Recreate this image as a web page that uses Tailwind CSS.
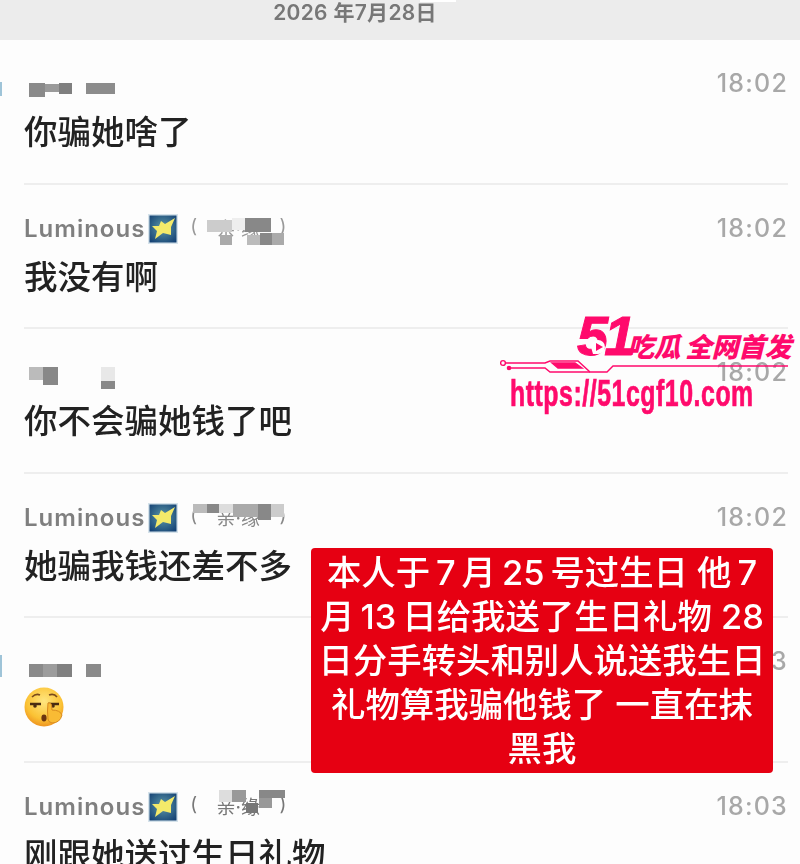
<!DOCTYPE html>
<html lang="zh">
<head>
<meta charset="utf-8">
<script src="https://cdn.jsdelivr.net/npm/@tailwindcss/browser@4"></script>
</head>
<body class="bg-white font-['Inter','Noto_Sans_CJK_SC',sans-serif]">
<div class="relative w-[800px] h-[864px] overflow-hidden bg-[#fdfdfd]">
  <!-- date bar -->
  <div class="h-[40px] bg-[#ececec] flex justify-center blur-[0.5px]">
    <span class="mr-[90px] mt-[-1px] text-[21px] leading-[28px] font-semibold text-[#777] tracking-[0.3px]">2026 年7月28日</span>
  </div>

  <!-- list -->
  <div class="pl-[24px] pr-[12px] blur-[0.5px]">
    <div class="h-[144.5px] border-b-[2px] border-[#eeeeee] pt-[28px]">
      <div class="h-[32px] flex justify-end items-center text-[25px] font-medium text-[#a8a8a8] tracking-[1.2px]"><span>18:02</span></div>
      <p class="mt-[8px] text-[33.5px] leading-[48px] font-medium text-[#222]">你骗她啥了</p>
    </div>
    <div class="h-[144.5px] border-b-[2px] border-[#eeeeee] pt-[28px]">
      <div class="h-[32px] flex justify-between items-center">
        <div class="flex items-center text-[24px] tracking-[1px] text-[#7f7f7f] font-semibold"><span>Luminous</span><svg class="ml-[3px]" width="30" height="30" viewBox="0 0 30 30"><defs><radialGradient id="s1" cx="50%" cy="45%" r="70%"><stop offset="0%" stop-color="#5e9aa8"/><stop offset="100%" stop-color="#123f73"/></radialGradient></defs><rect width="30" height="30" fill="#d5e2ea"/><rect x="1.5" y="1.5" width="27" height="27" fill="url(#s1)"/><path d="M13 7 L17 10 L27 4 L23 13 L23 21 L15 19 L7 25 L9 17 L4 12 L11 12Z" fill="#f4ea6a"/></svg><span class="ml-[12px] w-[96px] flex justify-between text-[#999] font-normal text-[19px] tracking-normal"><span>(</span><span class="mt-[3px]">亲·缘</span><span>)</span></span></div>
        <span class="text-[25px] font-medium text-[#a8a8a8] tracking-[1.2px]">18:02</span>
      </div>
      <p class="mt-[8px] text-[33.5px] leading-[48px] font-medium text-[#222]">我没有啊</p>
    </div>
    <div class="h-[144.5px] border-b-[2px] border-[#eeeeee] pt-[28px]">
      <div class="h-[32px] flex justify-end items-center text-[25px] font-medium text-[#a8a8a8] tracking-[1.2px]"><span>18:02</span></div>
      <p class="mt-[8px] text-[33.5px] leading-[48px] font-medium text-[#222]">你不会骗她钱了吧</p>
    </div>
    <div class="h-[144.5px] border-b-[2px] border-[#eeeeee] pt-[28px]">
      <div class="h-[32px] flex justify-between items-center">
        <div class="flex items-center text-[24px] tracking-[1px] text-[#7f7f7f] font-semibold"><span>Luminous</span><svg class="ml-[3px]" width="30" height="30" viewBox="0 0 30 30"><rect width="30" height="30" fill="#d5e2ea"/><rect x="1.5" y="1.5" width="27" height="27" fill="url(#s1)"/><path d="M13 7 L17 10 L27 4 L23 13 L23 21 L15 19 L7 25 L9 17 L4 12 L11 12Z" fill="#f4ea6a"/></svg><span class="ml-[12px] w-[96px] flex justify-between text-[#888] font-normal text-[19px] tracking-normal"><span>(</span><span class="mt-[3px]">亲·缘</span><span>)</span></span></div>
        <span class="text-[25px] font-medium text-[#a8a8a8] tracking-[1.2px]">18:02</span>
      </div>
      <p class="mt-[8px] text-[33.5px] leading-[48px] font-medium text-[#222]">她骗我钱还差不多</p>
    </div>
    <div class="h-[144.5px] border-b-[2px] border-[#eeeeee] pt-[28px]">
      <div class="h-[32px] flex justify-end items-center text-[25px] font-medium text-[#a8a8a8] tracking-[1.2px]"><span>18:03</span></div>
      <svg class="mt-[8px]" width="42" height="42" viewBox="0 0 42 42">
        <defs><radialGradient id="face" cx="50%" cy="35%" r="65%"><stop offset="0%" stop-color="#ffe680"/><stop offset="70%" stop-color="#fbc234"/><stop offset="100%" stop-color="#ee9420"/></radialGradient></defs>
        <circle cx="20" cy="21" r="19.5" fill="url(#face)"/>
        <path d="M8 11 Q12 7 16 9 M25 9 Q30 7 33 11" fill="none" stroke="#7a4a1c" stroke-width="1.6"/>
        <path d="M6 18 H17 M24 18 H35" stroke="#4a2c12" stroke-width="2.4"/>
        <circle cx="11" cy="20" r="1.8" fill="#4a2c12"/><circle cx="29" cy="20" r="1.8" fill="#4a2c12"/>
        <ellipse cx="20" cy="32" rx="2.6" ry="3.4" fill="#6b3410"/>
        <path d="M24 33 Q23 25 24 17 Q27 16 27.5 19 L28 24 Q36 24 38 29 Q36 37 28 37 Q24 36 24 33Z" fill="#f9bb34" stroke="#d98a1e" stroke-width="1"/>
      </svg>
    </div>
    <div class="h-[144.5px] pt-[28px]">
      <div class="h-[32px] flex justify-between items-center">
        <div class="flex items-center text-[24px] tracking-[1px] text-[#7f7f7f] font-semibold"><span>Luminous</span><svg class="ml-[3px]" width="30" height="30" viewBox="0 0 30 30"><rect width="30" height="30" fill="#d5e2ea"/><rect x="1.5" y="1.5" width="27" height="27" fill="url(#s1)"/><path d="M13 7 L17 10 L27 4 L23 13 L23 21 L15 19 L7 25 L9 17 L4 12 L11 12Z" fill="#f4ea6a"/></svg><span class="ml-[12px] w-[96px] flex justify-between text-[#777] font-normal text-[19px] tracking-normal"><span>(</span><span class="mt-[3px]">亲·缘</span><span>)</span></span></div>
        <span class="text-[25px] font-medium text-[#a8a8a8] tracking-[1.2px]">18:03</span>
      </div>
      <p class="mt-[8px] text-[33.5px] leading-[48px] font-medium text-[#222]">刚跟她送过生日礼物</p>
    </div>
  </div>

  <!-- mosaics laid over the names -->
  <div class="absolute inset-0 pointer-events-none blur-[0.6px]">
    <i class="absolute left-[420px] top-0 w-[36px] h-[2px] bg-white"></i>
    <i class="absolute left-[29px] top-[83px] w-[16px] h-[14px] bg-[#8a8a8a]"></i><i class="absolute left-[45px] top-[84px] w-[14px] h-[8px] bg-[#9a9a9a]"></i><i class="absolute left-[59px] top-[83px] w-[13px] h-[11px] bg-[#7f7f7f]"></i><i class="absolute left-[86px] top-[83px] w-[29px] h-[11px] bg-[#8c8c8c]"></i>
    <i class="absolute left-[207px] top-[220px] w-[25px] h-[12px] bg-[#cccccc]"></i><i class="absolute left-[232px] top-[218px] w-[13px] h-[12px] bg-[#eeeeee]"></i><i class="absolute left-[245px] top-[218px] w-[26px] h-[14px] bg-[#888888]"></i><i class="absolute left-[220px] top-[235px] w-[12px] h-[10px] bg-[#aaaaaa]"></i><i class="absolute left-[247px] top-[235px] w-[13px] h-[10px] bg-[#bbbbbb]"></i><i class="absolute left-[260px] top-[233px] w-[12px] h-[12px] bg-[#888888]"></i><i class="absolute left-[272px] top-[233px] w-[12px] h-[12px] bg-[#aaaaaa]"></i>
    <i class="absolute left-[29px] top-[367px] w-[14px] h-[13px] bg-[#bbbbbb]"></i><i class="absolute left-[43px] top-[367px] w-[15px] h-[18px] bg-[#888888]"></i><i class="absolute left-[101px] top-[367px] w-[14px] h-[14px] bg-[#e8e8e8]"></i><i class="absolute left-[101px] top-[381px] w-[14px] h-[8px] bg-[#888888]"></i>
    <i class="absolute left-[193px] top-[504px] w-[14px] h-[9px] bg-[#bbbbbb]"></i><i class="absolute left-[207px] top-[504px] w-[12px] h-[9px] bg-[#888888]"></i><i class="absolute left-[219px] top-[504px] w-[14px] h-[9px] bg-[#dddddd]"></i><i class="absolute left-[233px] top-[504px] w-[25px] h-[13px] bg-[#aaaaaa]"></i><i class="absolute left-[258px] top-[504px] w-[13px] h-[16px] bg-[#888888]"></i><i class="absolute left-[271px] top-[504px] w-[13px] h-[13px] bg-[#cccccc]"></i>
    <i class="absolute left-[29px] top-[664px] w-[14px] h-[13px] bg-[#8a8a8a]"></i><i class="absolute left-[43px] top-[664px] w-[14px] h-[13px] bg-[#9c9c9c]"></i><i class="absolute left-[57px] top-[664px] w-[15px] h-[13px] bg-[#808080]"></i><i class="absolute left-[86px] top-[664px] w-[15px] h-[13px] bg-[#8a8a8a]"></i>
    <i class="absolute left-[219px] top-[790px] w-[13px] h-[12px] bg-[#dddddd]"></i><i class="absolute left-[232px] top-[790px] w-[14px] h-[12px] bg-[#999999]"></i><i class="absolute left-[246px] top-[803px] w-[12px] h-[10px] bg-[#777777]"></i><i class="absolute left-[259px] top-[790px] w-[26px] h-[8px] bg-[#888888]"></i><i class="absolute left-[259px] top-[798px] w-[13px] h-[10px] bg-[#999999]"></i>
    <i class="absolute left-0 top-[82px] w-[2px] h-[14px] bg-[#9fc4d8]"></i><i class="absolute left-0 top-[655px] w-[2px] h-[22px] bg-[#9fc4d8]"></i>
  </div>

  <!-- red note -->
  <div class="absolute left-[311px] top-[548px] w-[462px] h-[225px] rounded-[4px] bg-[#e60012] flex items-center justify-center text-center text-white text-[34.4px] leading-[44px] font-medium blur-[0.4px]">
    <p class="whitespace-nowrap">本人于&thinsp;7&thinsp;月&thinsp;25&thinsp;号过生日 他&thinsp;7<br>月&thinsp;13&thinsp;日给我送了生日礼物 28<br>日分手转头和别人说送我生日<br>礼物算我骗他钱了 一直在抹<br>黑我</p>
  </div>

  <!-- watermark -->
  <div class="absolute left-[500px] top-[310px] w-[300px] h-[105px] text-[#ff0a6c]">
    <svg class="absolute left-0 top-[45px]" width="300" height="25" viewBox="500 355 300 25" fill="none" stroke="#ff0a6c" stroke-width="1.4">
      <circle cx="503" cy="363" r="2.4"/><circle cx="509" cy="368" r="1.6" fill="#ff0a6c"/>
      <path d="M505 363 H545 L550 361 H578 L590 372 H607 L613 366 H788"/>
      <path d="M510 368 H545 L550 372 H590"/>
      <path d="M552 363 H575 L582 368 H558Z" fill="#ff0a6c"/>
    </svg>
    <span class="absolute left-[77px] top-[-2px] text-[56px] leading-[56px] font-black italic font-['Liberation_Sans'] tracking-[-4px] [-webkit-text-stroke:1px_#ff0a6c]">51</span>
    <svg class="absolute left-[89px] top-[29px]" width="18" height="16" viewBox="0 0 18 16"><path d="M2 8 A7 7 0 1 1 9 15 L4 15Z" fill="#fff"/><path d="M7 4 L14 8 L7 12Z" fill="#ff0a6c"/></svg>
    <span class="absolute left-[127px] top-[20px] text-[27px] leading-[32px] font-black italic font-['Noto_Sans_CJK_SC'] whitespace-nowrap tracking-[-0.5px]">吃瓜<span class="ml-[5px]">全网首发</span></span>
    <span class="absolute left-[10px] top-[64px] origin-left scale-x-[0.69] text-[36px] leading-[40px] font-bold font-['Liberation_Sans',sans-serif] whitespace-nowrap tracking-[0.8px] [-webkit-text-stroke:0.7px_#ff0a6c]">https://51cgf10.com</span>
  </div>
</div>
</body>
</html>
